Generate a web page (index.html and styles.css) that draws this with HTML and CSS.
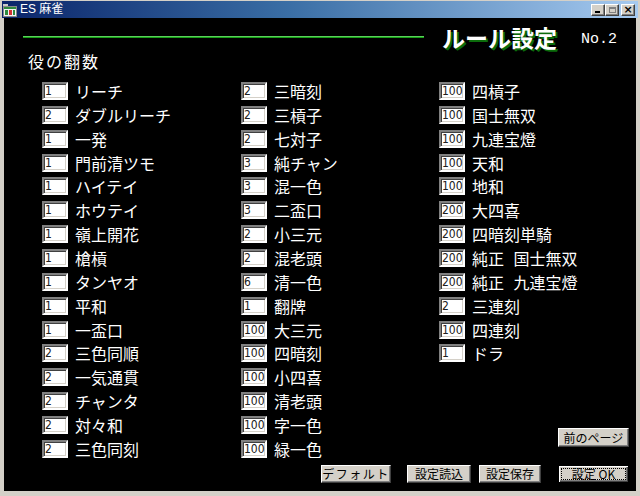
FILE: index.html
```html
<!DOCTYPE html>
<html lang="ja">
<head>
<meta charset="utf-8">
<title>ES 麻雀</title>
<link rel="stylesheet" href="styles.css">
</head>
<body>
<div class="window">
  <div class="titlebar">
    <svg class="appicon" width="14" height="13" viewBox="0 0 14 13">
      <rect x="0.5" y="2.5" width="13" height="10" fill="#f4f4f4" stroke="#8a8a8a"/>
      <rect x="1" y="3" width="12" height="2" fill="#2e8b3e"/>
      <rect x="2" y="6" width="3" height="5" fill="#2e8b3e"/>
      <rect x="6" y="6" width="3" height="5" fill="#d23030"/>
      <rect x="10" y="6" width="2" height="5" fill="#2e8b3e"/>
      <rect x="0" y="0" width="5" height="2" fill="#c9c9c9"/>
    </svg>
    <span class="apptitle">ES 麻雀</span>
    <div class="controls">
      <span class="ctl ctl-min"><i></i></span>
      <span class="ctl ctl-max"><i></i></span>
      <span class="ctl ctl-close">×</span>
    </div>
  </div>
  <div class="client">
    <div class="header">
      <div class="rule"></div>
      <h1 class="heading">ルール設定</h1>
      <span class="pageno">No.2</span>
    </div>
    <div class="section">役の翻数</div>
    <div class="grid">
      <div class="col col1">
        <div class="row"><input class="box" value="1"><span class="label">リーチ</span></div>
        <div class="row"><input class="box" value="2"><span class="label">ダブルリーチ</span></div>
        <div class="row"><input class="box" value="1"><span class="label">一発</span></div>
        <div class="row"><input class="box" value="1"><span class="label">門前清ツモ</span></div>
        <div class="row"><input class="box" value="1"><span class="label">ハイテイ</span></div>
        <div class="row"><input class="box" value="1"><span class="label">ホウテイ</span></div>
        <div class="row"><input class="box" value="1"><span class="label">嶺上開花</span></div>
        <div class="row"><input class="box" value="1"><span class="label">槍槓</span></div>
        <div class="row"><input class="box" value="1"><span class="label">タンヤオ</span></div>
        <div class="row"><input class="box" value="1"><span class="label">平和</span></div>
        <div class="row"><input class="box" value="1"><span class="label">一盃口</span></div>
        <div class="row"><input class="box" value="2"><span class="label">三色同順</span></div>
        <div class="row"><input class="box" value="2"><span class="label">一気通貫</span></div>
        <div class="row"><input class="box" value="2"><span class="label">チャンタ</span></div>
        <div class="row"><input class="box" value="2"><span class="label">対々和</span></div>
        <div class="row"><input class="box" value="2"><span class="label">三色同刻</span></div>
      </div>
      <div class="col col2">
        <div class="row"><input class="box" value="2"><span class="label">三暗刻</span></div>
        <div class="row"><input class="box" value="2"><span class="label">三槓子</span></div>
        <div class="row"><input class="box" value="2"><span class="label">七対子</span></div>
        <div class="row"><input class="box" value="3"><span class="label">純チャン</span></div>
        <div class="row"><input class="box" value="3"><span class="label">混一色</span></div>
        <div class="row"><input class="box" value="3"><span class="label">二盃口</span></div>
        <div class="row"><input class="box" value="2"><span class="label">小三元</span></div>
        <div class="row"><input class="box" value="2"><span class="label">混老頭</span></div>
        <div class="row"><input class="box" value="6"><span class="label">清一色</span></div>
        <div class="row"><input class="box" value="1"><span class="label">翻牌</span></div>
        <div class="row"><input class="box" value="100"><span class="label">大三元</span></div>
        <div class="row"><input class="box" value="100"><span class="label">四暗刻</span></div>
        <div class="row"><input class="box" value="100"><span class="label">小四喜</span></div>
        <div class="row"><input class="box" value="100"><span class="label">清老頭</span></div>
        <div class="row"><input class="box" value="100"><span class="label">字一色</span></div>
        <div class="row"><input class="box" value="100"><span class="label">緑一色</span></div>
      </div>
      <div class="col col3">
        <div class="row"><input class="box" value="100"><span class="label">四槓子</span></div>
        <div class="row"><input class="box" value="100"><span class="label">国士無双</span></div>
        <div class="row"><input class="box" value="100"><span class="label">九連宝燈</span></div>
        <div class="row"><input class="box" value="100"><span class="label">天和</span></div>
        <div class="row"><input class="box" value="100"><span class="label">地和</span></div>
        <div class="row"><input class="box" value="200"><span class="label">大四喜</span></div>
        <div class="row"><input class="box" value="200"><span class="label">四暗刻単騎</span></div>
        <div class="row"><input class="box" value="200"><span class="label wide">純正 国士無双</span></div>
        <div class="row"><input class="box" value="200"><span class="label wide">純正 九連宝燈</span></div>
        <div class="row"><input class="box" value="2"><span class="label">三連刻</span></div>
        <div class="row"><input class="box" value="100"><span class="label">四連刻</span></div>
        <div class="row"><input class="box" value="1"><span class="label">ドラ</span></div>
        <button class="btn btn-prev">前のページ</button>
      </div>
    </div>
    <div class="actions">
      <button class="btn btn-default">デフォルト</button>
      <button class="btn btn-load">設定読込</button>
      <button class="btn btn-save">設定保存</button>
      <button class="btn btn-ok"><span class="focus">設定 OK</span></button>
    </div>
  </div>
</div>
</body>
</html>
```
FILE: styles.css
```css
html, body {
  margin: 0;
  padding: 0;
  background: #d4d0c8;
}

.window {
  width: 640px;
  height: 496px;
  box-sizing: border-box;
  background: #d4d0c8;
  padding: 1px 2px 5px 2px;
  display: flex;
  flex-direction: column;
  font-family: "Noto Sans CJK JP", "Liberation Sans", sans-serif;
}

.titlebar {
  height: 17px;
  flex: none;
  display: flex;
  align-items: center;
  background: linear-gradient(to right, #0a246a 0%, #3a6ea5 45%, #a6caf0 100%);
  padding-left: 1px;
}

.appicon {
  flex: none;
  margin-top: 1px;
}

.apptitle {
  margin-left: 3px;
  color: #fff;
  font-size: 12px;
  line-height: 17px;
  font-family: "Liberation Sans", "Noto Sans CJK JP", sans-serif;
}

.controls {
  margin-left: auto;
  display: flex;
  align-items: center;
  padding-right: 3px;
}

.ctl {
  width: 14px;
  height: 12px;
  box-sizing: border-box;
  background: #d4d0c8;
  border: 1px solid;
  border-color: #fff #404040 #404040 #fff;
  box-shadow: inset -1px -1px #808080;
  position: relative;
  display: flex;
  align-items: center;
  justify-content: center;
  font-family: "DejaVu Sans", sans-serif;
  font-size: 11px;
  font-weight: bold;
  line-height: 10px;
  color: #000;
}

.ctl-min i {
  position: absolute;
  left: 3px;
  bottom: 2px;
  width: 5px;
  height: 2px;
  background: #000;
}

.ctl-max i {
  width: 7px;
  height: 6px;
  box-sizing: border-box;
  border: 1px solid #808080;
  border-top-width: 2px;
}

.ctl-close {
  margin-left: 2px;
}

.client {
  flex: 1;
  margin: 0 2px;
  background: #000;
  display: flex;
  flex-direction: column;
  color: #fff;
}

.header {
  margin-top: 2px;
  height: 34px;
  display: flex;
  align-items: center;
  padding: 0 19px 0 19px;
}

.rule {
  flex: 1;
  height: 2px;
  background: #18a018;
  border-top: 1px solid #5ad05a;
  box-sizing: border-box;
  margin-right: 18px;
}

.heading {
  margin: 0;
  font-size: 23px;
  line-height: 34px;
  font-weight: bold;
  color: #fff;
  text-shadow: 2px 2px 0 #0b6b0b;
}

.pageno {
  margin-left: 24px;
  padding-top: 5px;
  font-family: "Liberation Mono", "DejaVu Sans Mono", monospace;
  font-size: 15px;
  color: #fff;
}

.section {
  margin-top: -2px;
  padding-left: 24px;
  height: 18px;
  font-size: 16px;
  line-height: 18px;
  letter-spacing: 2px;
}

.grid {
  margin-top: 9px;
  padding-left: 38px;
  display: flex;
}

.col {
  display: flex;
  flex-direction: column;
}

.col1 { width: 199px; }
.col2 { width: 198px; }
.col3 { width: 190px; }

.row {
  height: 23.87px;
  display: flex;
  align-items: center;
}

.box {
  width: 26px;
  height: 18px;
  box-sizing: border-box;
  margin: 0 7px 0 0;
  padding: 0 0 0 1px;
  border: 2px solid;
  border-color: #808080 #fff #fff #808080;
  box-shadow: inset 1px 1px #404040, inset -1px -1px #d4d0c8;
  background: #fff;
  color: #202020;
  font-family: "Liberation Sans Narrow", "DejaVu Sans Condensed", "Liberation Sans", sans-serif;
  font-size: 12px;
  line-height: 14px;
  outline: none;
}

.label {
  font-size: 16px;
  line-height: 24px;
  color: #fff;
  white-space: pre;
}

.label.wide {
  word-spacing: 6px;
}

.btn {
  box-sizing: border-box;
  height: 19px;
  padding: 0;
  margin: 0;
  background: #d4d0c8;
  border: 1px solid;
  border-color: #fff #404040 #404040 #fff;
  box-shadow: inset -1px -1px #808080;
  font-family: "Noto Sans CJK JP", sans-serif;
  font-size: 12px;
  line-height: 15px;
  color: #000;
  white-space: nowrap;
  display: flex;
  align-items: center;
  justify-content: center;
}

.btn-prev {
  margin-top: auto;
  margin-bottom: 14px;
  align-self: flex-end;
  width: 71px;
}

.actions {
  margin-top: 4px;
  padding-right: 7px;
  display: flex;
  justify-content: flex-end;
}

.actions .btn {
  height: 18px;
}

.btn-default {
  width: 70px;
  letter-spacing: 1.5px;
  margin-right: 16px;
}

.btn-load {
  width: 64px;
  margin-right: 8px;
}

.btn-save {
  width: 62px;
  margin-right: 17px;
}

.btn-ok {
  width: 71px;
  border: 1px solid #000;
  box-shadow: inset 1px 1px #fff, inset -1px -1px #404040, inset -2px -2px #808080;
  padding: 2px;
}

.btn-ok .focus {
  flex: 1;
  align-self: stretch;
  border: 1px dotted #000;
  display: flex;
  align-items: center;
  justify-content: center;
  line-height: 12px;
}
```
